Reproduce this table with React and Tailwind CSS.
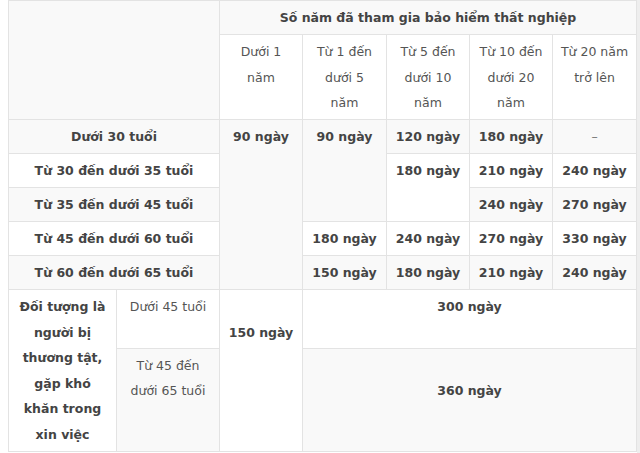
import React from 'react';

const cell = 'border border-[#e3e3e3] text-center align-top pt-[4px] pb-[3.5px] px-1 whitespace-nowrap';

const Table = () => {
  return (
    <table className="table-fixed border-collapse w-[628px] text-[12.5px] leading-[25.5px] text-[#444]">
      <colgroup>
        <col className="w-[108px]" />
        <col className="w-[103px]" />
        <col className="w-[83px]" />
        <col className="w-[84px]" />
        <col className="w-[83px]" />
        <col className="w-[83px]" />
        <col className="w-[84px]" />
      </colgroup>
      <tbody>
        {/* Header */}
        <tr className="bg-[#f9f9f9]">
          <td colSpan={2} rowSpan={2} className={cell}></td>
          <td colSpan={5} className={`${cell} font-bold`}>Số năm đã tham gia bảo hiểm thất nghiệp</td>
        </tr>
        <tr className="bg-white text-[#555]">
          <td className={cell}>Dưới 1<br />năm</td>
          <td className={cell}>Từ 1 đến<br />dưới 5<br />năm</td>
          <td className={cell}>Từ 5 đến<br />dưới 10<br />năm</td>
          <td className={cell}>Từ 10 đến<br />dưới 20<br />năm</td>
          <td className={cell}>Từ 20 năm<br />trở lên</td>
        </tr>

        {/* Age groups */}
        <tr className="bg-[#f9f9f9] font-bold">
          <td colSpan={2} className={cell}>Dưới 30 tuổi</td>
          <td rowSpan={5} className={cell}>90 ngày</td>
          <td rowSpan={3} className={cell}>90 ngày</td>
          <td className={cell}>120 ngày</td>
          <td className={cell}>180 ngày</td>
          <td className={`${cell} font-normal text-[#777]`}>–</td>
        </tr>
        <tr className="bg-white font-bold">
          <td colSpan={2} className={cell}>Từ 30 đến dưới 35 tuổi</td>
          <td rowSpan={2} className={cell}>180 ngày</td>
          <td className={cell}>210 ngày</td>
          <td className={cell}>240 ngày</td>
        </tr>
        <tr className="bg-[#f9f9f9] font-bold">
          <td colSpan={2} className={cell}>Từ 35 đến dưới 45 tuổi</td>
          <td className={cell}>240 ngày</td>
          <td className={cell}>270 ngày</td>
        </tr>
        <tr className="bg-white font-bold">
          <td colSpan={2} className={cell}>Từ 45 đến dưới 60 tuổi</td>
          <td className={cell}>180 ngày</td>
          <td className={cell}>240 ngày</td>
          <td className={cell}>270 ngày</td>
          <td className={cell}>330 ngày</td>
        </tr>
        <tr className="bg-[#f9f9f9] font-bold">
          <td colSpan={2} className={cell}>Từ 60 đến dưới 65 tuổi</td>
          <td className={cell}>150 ngày</td>
          <td className={cell}>180 ngày</td>
          <td className={cell}>210 ngày</td>
          <td className={cell}>240 ngày</td>
        </tr>

        {/* Special group */}
        <tr className="bg-white">
          <td rowSpan={2} className={`${cell} font-bold`}>
            Đối tượng là<br />người bị<br />thương tật,<br />gặp khó<br />khăn trong<br />xin việc
          </td>
          <td className={`${cell} text-[#555]`}>Dưới 45 tuổi</td>
          <td rowSpan={2} className={`${cell} font-bold`}>
            <br />
            150 ngày
          </td>
          <td colSpan={4} className={`${cell} font-bold`}>300 ngày</td>
        </tr>
        <tr className="bg-[#f9f9f9]">
          <td className={`${cell} text-[#555]`}>Từ 45 đến<br />dưới 65 tuổi</td>
          <td colSpan={4} className={`${cell} font-bold`}>
            <br />
            360 ngày
          </td>
        </tr>
      </tbody>
    </table>
  );
};

const App = () => {
  return (
    <div className="min-h-screen bg-white flex font-['DejaVu_Sans',sans-serif]">
      <div className="pl-2">
        <Table />
      </div>
      <div className="ml-auto w-[4px] bg-[#eeeeee]"></div>
    </div>
  );
};

export default App;
